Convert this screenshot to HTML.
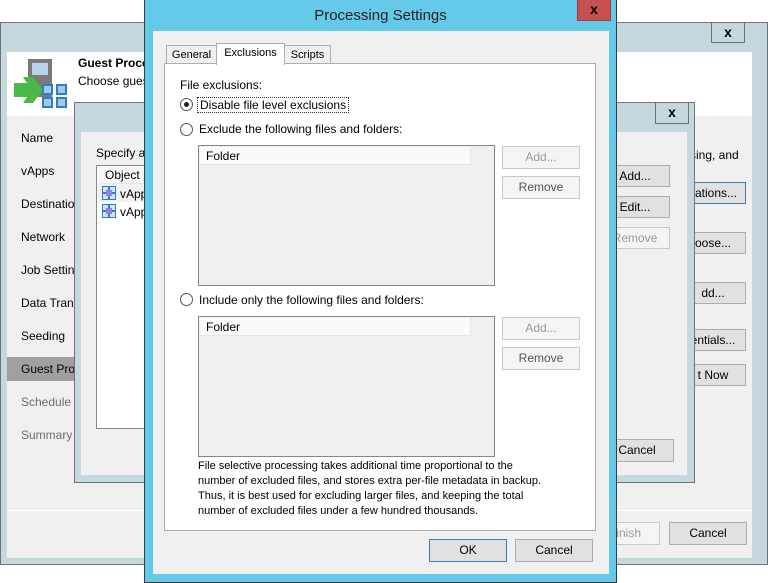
<!DOCTYPE html>
<html><head><style>
*{box-sizing:border-box;margin:0;padding:0}
body{width:768px;height:583px;background:#fff;position:relative;overflow:hidden;font-family:"Liberation Sans",sans-serif;font-size:12px;color:#000}
.a{position:absolute}
.btn{position:absolute;background:#e1e1e1;border:1px solid #adadad;text-align:center;line-height:20px;font-size:12px}
.dis{background:#f4f4f4;border-color:#c8c8c8;color:#9a9a9a}
.x{position:absolute;border:1px solid #707070;text-align:center;font-weight:bold;font-size:14px;line-height:18px}
.nav{position:absolute;left:21px;font-size:12px}
.rad{position:absolute;width:13px;height:13px;border:1px solid #555;border-radius:50%;background:#fff}
</style></head><body>
<!-- back window -->
<div class="a" style="left:0;top:22px;width:768px;height:543px;background:#c5d8de;border:1px solid #6e7378"></div>
<div class="x" style="left:711px;top:22px;width:34px;height:21px;background:#c5d8de">x</div>
<div class="a" style="left:7px;top:52px;width:745px;height:506px;background:#f0f0f0"></div>
<div class="a" style="left:7px;top:52px;width:745px;height:64px;background:#fff"></div>
<svg class="a" style="left:13px;top:58px" width="55" height="52">
<rect x="15" y="1" width="24" height="38" fill="#7a7a7a"/><rect x="19" y="5" width="16" height="12" fill="#b7d3ea"/>
<polygon points="1,25 14,25 10,19 20,19 30,32 20,45 10,45 14,39 1,39" fill="#4cb848"/>
<rect x="30" y="27" width="9" height="9" fill="#9fcbe8" stroke="#2d7fc1" stroke-width="2"/>
<rect x="44" y="27" width="9" height="9" fill="#9fcbe8" stroke="#2d7fc1" stroke-width="2"/>
<rect x="30" y="40" width="9" height="9" fill="#9fcbe8" stroke="#2d7fc1" stroke-width="2"/>
<rect x="44" y="40" width="9" height="9" fill="#9fcbe8" stroke="#2d7fc1" stroke-width="2"/>
</svg>
<div class="a" style="left:78px;top:56px;font-weight:bold;font-size:12px">Guest Processing</div>
<div class="a" style="left:78px;top:74px">Choose guest OS processing options</div>
<div class="a" style="left:7px;top:357px;width:67px;height:24px;background:#a0a0a0"></div>
<div class="nav" style="top:131px">Name</div>
<div class="nav" style="top:164px">vApps</div>
<div class="nav" style="top:197px">Destination</div>
<div class="nav" style="top:230px">Network</div>
<div class="nav" style="top:263px">Job Settings</div>
<div class="nav" style="top:296px">Data Transfer</div>
<div class="nav" style="top:329px">Seeding</div>
<div class="nav" style="top:362px">Guest Processing</div>
<div class="nav" style="top:395px;color:#6d6d6d">Schedule</div>
<div class="nav" style="top:428px;color:#6d6d6d">Summary</div>
<div class="a" style="left:7px;top:510px;width:745px;height:1px;background:#fff"></div>
<div class="a" style="left:690px;top:148px">sing, and</div>
<div class="btn" style="left:680px;top:182px;width:66px;border-color:#3c7fb1">cations...</div>
<div class="btn" style="left:680px;top:232px;width:66px">oose...</div>
<div class="btn" style="left:680px;top:282px;width:66px">dd...</div>
<div class="btn" style="left:680px;top:329px;width:66px">entials...</div>
<div class="btn" style="left:680px;top:364px;width:66px">t Now</div>
<div class="btn dis" style="left:590px;top:522px;width:70px;height:23px">Finish</div>
<div class="btn" style="left:669px;top:522px;width:78px;height:23px">Cancel</div>
<!-- middle window -->
<div class="a" style="left:74px;top:102px;width:621px;height:381px;background:#c5d8de;border:1px solid #6e7378"></div>
<div class="x" style="left:655px;top:102px;width:34px;height:22px;background:#c5d8de">x</div>
<div class="a" style="left:81px;top:132px;width:606px;height:343px;background:#f0f0f0"></div>
<div class="a" style="left:96px;top:146px">Specify application-aware processing</div>
<div class="a" style="left:96px;top:165px;width:100px;height:264px;background:#fff;border:1px solid #828790"></div>
<div class="a" style="left:99px;top:167px;width:60px;height:17px;background:#f7f7f7;border-bottom:1px solid #e5e5e5"></div>
<div class="a" style="left:105px;top:168px">Object</div>
<div class="a" style="left:98px;top:184px;width:60px;height:18px;background:#f1f1f1"></div>
<svg class="a" style="left:102px;top:186px" width="15" height="32"><g fill="#cfe4f4" stroke="#2d7fc1"><rect x=".5" y=".5" width="6" height="6"/><rect x="7.5" y=".5" width="6" height="6"/><rect x=".5" y="7.5" width="6" height="6"/><rect x="7.5" y="7.5" width="6" height="6"/><rect x=".5" y="18.5" width="6" height="6"/><rect x="7.5" y="18.5" width="6" height="6"/><rect x=".5" y="25.5" width="6" height="6"/><rect x="7.5" y="25.5" width="6" height="6"/></g><rect x="4" y="4" width="6" height="6" fill="#9a7bd8"/><rect x="4" y="22" width="6" height="6" fill="#9a7bd8"/></svg>
<div class="a" style="left:120px;top:187px">vApp</div>
<div class="a" style="left:120px;top:205px">vApp</div>
<div class="btn" style="left:600px;top:165px;width:70px">Add...</div>
<div class="btn" style="left:600px;top:196px;width:70px">Edit...</div>
<div class="btn dis" style="left:600px;top:227px;width:70px">Remove</div>
<div class="btn" style="left:600px;top:439px;width:74px;height:23px">Cancel</div>
<!-- front dialog -->
<div class="a" style="left:144px;top:0;width:473px;height:583px;background:#65c9ea;border:1px solid #3b3b3b;border-top:none"></div>
<div class="a" style="left:144px;top:0;width:473px;height:31px;text-align:center;line-height:32px;font-size:15px;color:#222">Processing Settings</div>
<div class="x" style="left:577px;top:0;width:34px;height:21px;background:#c75050;border-color:#a03c3c;border-top:none">x</div>
<div class="a" style="left:153px;top:31px;width:456px;height:543px;background:#f0f0f0"></div>
<div class="a" style="left:164px;top:63px;width:432px;height:468px;background:#fff;border:1px solid #adadad"></div>
<div class="a" style="left:166px;top:45px;width:51px;height:19px;background:#f0f0f0;border:1px solid #adadad;text-align:center;line-height:18px;font-size:11px">General</div>
<div class="a" style="left:284px;top:45px;width:47px;height:19px;background:#f0f0f0;border:1px solid #adadad;text-align:center;line-height:18px;font-size:11px">Scripts</div>
<div class="a" style="left:216px;top:43px;width:69px;height:22px;background:#fff;border:1px solid #adadad;border-bottom:none;text-align:center;line-height:18px;font-size:11px">Exclusions</div>
<div class="a" style="left:180px;top:78px">File exclusions:</div>
<div class="rad" style="left:180px;top:98px"><div class="a" style="left:3px;top:3px;width:5px;height:5px;border-radius:50%;background:#222"></div></div>
<div class="a" style="left:197px;top:97px;border:1px dotted #333;padding:0 2px;line-height:14px">Disable file level exclusions</div>
<div class="rad" style="left:180px;top:123px"></div>
<div class="a" style="left:199px;top:122px">Exclude the following files and folders:</div>
<div class="a" style="left:198px;top:145px;width:297px;height:141px;background:#f0f0f0;border:1px solid #828790"></div>
<div class="a" style="left:200px;top:147px;width:271px;height:18px;background:#fafafa;border-bottom:1px solid #e5e5e5;border-right:1px solid #e5e5e5;padding-left:6px;line-height:18px">Folder</div>
<div class="btn dis" style="left:502px;top:146px;width:78px;height:23px">Add...</div>
<div class="btn dis" style="left:502px;top:176px;width:78px;height:23px;color:#555">Remove</div>
<div class="rad" style="left:180px;top:293px"></div>
<div class="a" style="left:199px;top:293px">Include only the following files and folders:</div>
<div class="a" style="left:198px;top:316px;width:297px;height:141px;background:#f0f0f0;border:1px solid #828790"></div>
<div class="a" style="left:200px;top:318px;width:271px;height:18px;background:#fafafa;border-bottom:1px solid #e5e5e5;border-right:1px solid #e5e5e5;padding-left:6px;line-height:18px">Folder</div>
<div class="btn dis" style="left:502px;top:317px;width:78px;height:23px">Add...</div>
<div class="btn dis" style="left:502px;top:347px;width:78px;height:23px;color:#555">Remove</div>
<div class="a" style="left:198px;top:459px;white-space:nowrap;font-size:11px;line-height:15px">File selective processing takes additional time proportional to the<br>number of excluded files, and stores extra per-file metadata in backup.<br>Thus, it is best used for excluding larger files, and keeping the total<br>number of excluded files under a few hundred thousands.</div>
<div class="btn" style="left:429px;top:539px;width:78px;height:23px;border-color:#3c7fb1">OK</div>
<div class="btn" style="left:515px;top:539px;width:78px;height:23px">Cancel</div>
</body></html>
